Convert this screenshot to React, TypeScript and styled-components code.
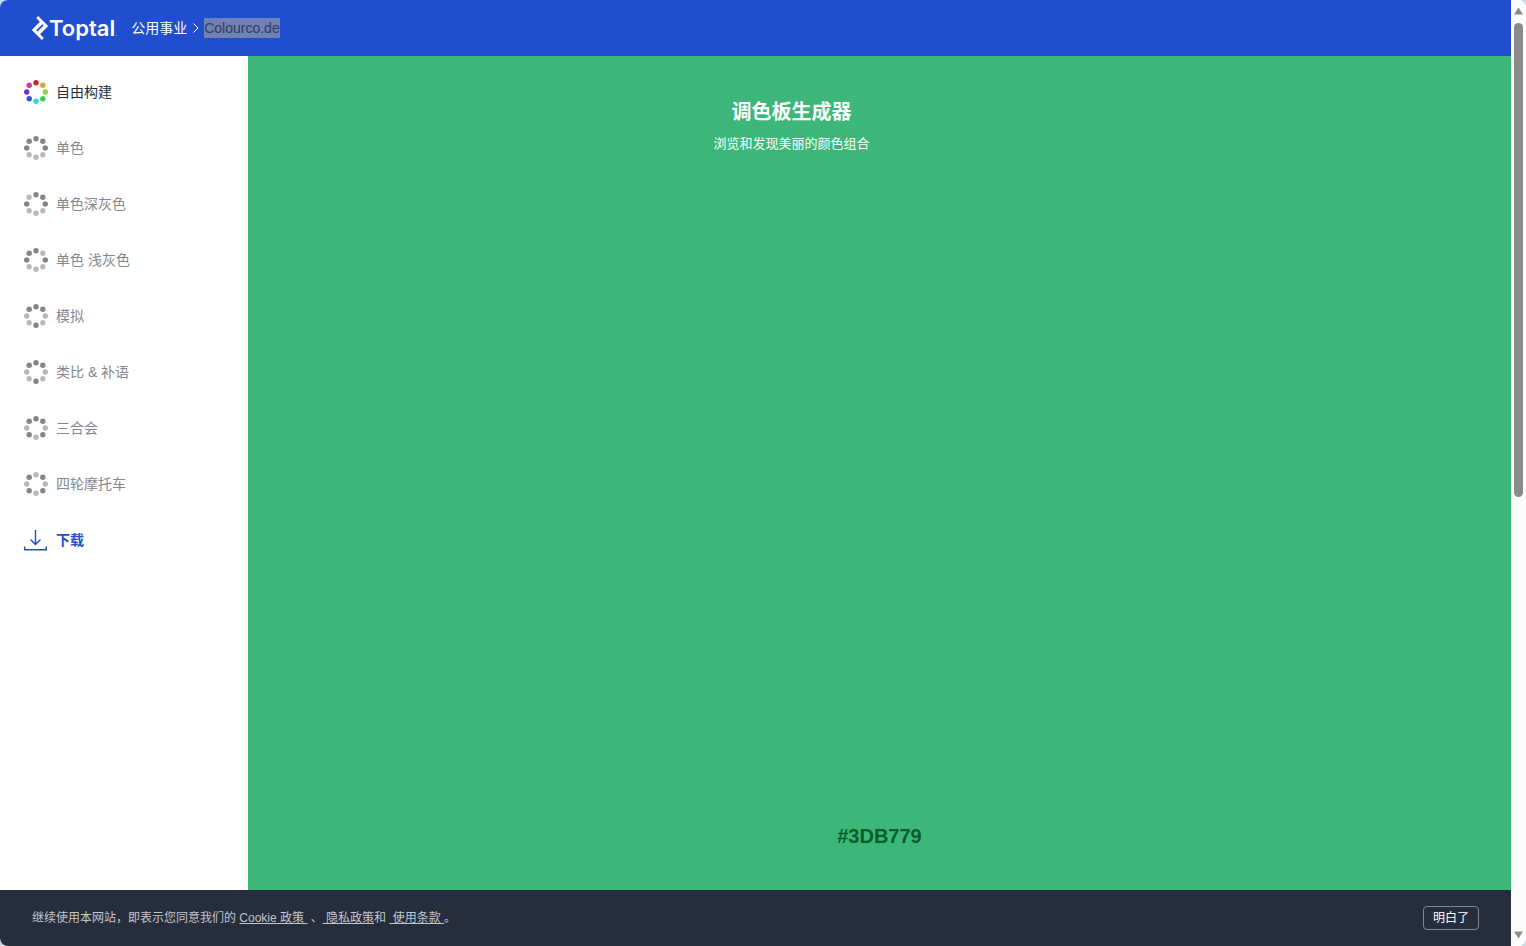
import React from "react";
import styled, { createGlobalStyle } from "styled-components";
import { SiToptal } from "react-icons/si";

const GlobalStyle = createGlobalStyle`
  *, *::before, *::after { box-sizing: border-box; }
  html { background: #c9d8e0; }
  body {
    margin: 0;
    font-family: "Liberation Sans", "Noto Sans CJK SC", sans-serif;
    font-size: 14px;
    line-height: 20px;
  }
`;

const Window = styled.div`
  display: flex;
  min-height: 100vh;
  overflow: hidden;
  border-radius: 8px;
  background: #fff;
`;

const Page = styled.div`
  flex: 1;
  min-width: 0;
  display: flex;
  flex-direction: column;
`;

const TopBar = styled.header`
  display: flex;
  align-items: center;
  gap: 14px;
  height: 56px;
  padding: 0 32px;
  background: #204ecf;
  color: #fff;
`;

const Logo = styled.a`
  display: flex;
  align-items: center;
  color: #fff;
  text-decoration: none;
`;

const LogoMark = styled(SiToptal)`
  width: 24px;
  height: 24px;
  margin: 0 -3px 0 -4px;
`;

const LogoWord = styled.span`
  font: 600 22px/24px Inter, sans-serif;
`;

const LogoDot = styled.span`
  align-self: flex-end;
  width: 1px;
  height: 1px;
  margin: 0 0 4px 1px;
  background: #9fb4ec;
`;

const Breadcrumb = styled.nav`
  display: flex;
  align-items: center;
  gap: 4px;
`;

const Crumb = styled.a`
  color: #fff;
  text-decoration: none;
`;

const CurrentCrumb = styled.span`
  background: #7180b5;
  color: #323c5c;
`;

const Body = styled.div`
  flex: 1;
  display: flex;
`;

const Sidebar = styled.nav`
  flex: 0 0 248px;
  display: flex;
  flex-direction: column;
  align-items: flex-start;
  gap: 32px;
  padding: 24px;
`;

const SchemeButton = styled.button<{ $active?: boolean; $accent?: boolean }>`
  display: flex;
  align-items: center;
  gap: 8px;
  height: 24px;
  padding: 0;
  border: 0;
  background: none;
  font: inherit;
  font-weight: ${(p) => (p.$accent ? 700 : 400)};
  color: ${(p) => (p.$accent ? "#204ecf" : p.$active ? "#262d3d" : "#84888e")};
  cursor: pointer;
`;

const Canvas = styled.main`
  flex: 1;
  display: flex;
  flex-direction: column;
  justify-content: space-between;
  padding: 40px 0;
  background: #3db779;
`;

const Intro = styled.div`
  padding-right: 176px;
  text-align: center;
  color: #fff;
`;

const Title = styled.h1`
  margin: 0;
  font-size: 20px;
  line-height: 32px;
`;

const Subtitle = styled.p`
  margin: 4px 0 0;
  font-size: 13px;
  line-height: 24px;
`;

const HexValue = styled.button`
  align-self: center;
  padding: 0;
  border: 0;
  background: none;
  font: inherit;
  font-size: 20px;
  font-weight: 700;
  line-height: 28px;
  color: #045e26;
  cursor: pointer;
`;

const CookieBar = styled.footer`
  display: flex;
  align-items: center;
  justify-content: space-between;
  height: 56px;
  padding: 0 32px;
  background: #262d3d;
  color: #c4c6ca;
  font-size: 12px;
`;

const Notice = styled.p`
  margin: 0;
  white-space: pre-wrap;
`;

const PolicyLink = styled.a`
  color: inherit;
  text-decoration: underline;
`;

const AcceptButton = styled.button`
  width: 56px;
  height: 24px;
  padding: 0;
  border: 1px solid #84888e;
  border-radius: 4px;
  background: none;
  font: inherit;
  line-height: 20px;
  color: #fff;
  cursor: pointer;
`;

const ScrollTrack = styled.div`
  flex: 0 0 15px;
  display: flex;
  flex-direction: column;
  align-items: center;
  gap: 8px;
  padding: 7px 0;
  background: #fcfcfc;
`;

const ScrollRail = styled.div`
  flex: 1;
  width: 9px;
`;

const ScrollThumb = styled.div<{ $share: number }>`
  height: ${(p) => p.$share * 100}%;
  border-radius: 5px;
  background: #8b8b8b;
`;

const points = [
  [12, 2.7], [18.8, 5.2], [21.3, 12], [18.8, 18.8],
  [12, 21.3], [5.2, 18.8], [2.7, 12], [5.2, 5.2],
];

const hues = ["#d0222b", "#e0a032", "#8fd640", "#35cf54", "#35d3d6", "#2f55cf", "#7430c4", "#cc35a4"];

const shade = (pattern: string) =>
  [...pattern].map((c) => (c === "1" ? "#84848a" : "#b9b9bc"));

function Wheel({ colors }: { colors: string[] }) {
  return (
    <svg width="24" height="24" viewBox="0 0 24 24" aria-hidden="true">
      {points.map(([x, y], i) => (
        <circle key={i} cx={x} cy={y} r="2.7" fill={colors[i]} />
      ))}
    </svg>
  );
}

// Each pattern runs clockwise from the top dot.
const schemes = [
  { name: "自由构建", colors: hues, active: true },
  { name: "单色", colors: shade("11100011") },
  { name: "单色深灰色", colors: shade("11100010") },
  { name: "单色 浅灰色", colors: shade("10100011") },
  { name: "模拟", colors: shade("11001001") },
  { name: "类比 & 补语", colors: shade("11001001") },
  { name: "三合会", colors: shade("11010101") },
  { name: "四轮摩托车", colors: shade("01010101") },
];

export default function App() {
  return (
    <>
      <GlobalStyle />
      <Window>
        <Page>
          <TopBar>
            <Logo href="#">
              <LogoMark aria-hidden="true" />
              <LogoWord>Toptal</LogoWord>
              <LogoDot />
            </Logo>
            <Breadcrumb>
              <Crumb href="#">公用事业</Crumb>
              <svg width="9" height="12" viewBox="0 0 9 12" fill="none" stroke="#fff" aria-hidden="true">
                <path d="M2.5 1.5L7 6l-4.5 4.5" />
              </svg>
              <CurrentCrumb>Colourco.de</CurrentCrumb>
            </Breadcrumb>
          </TopBar>
          <Body>
            <Sidebar>
              {schemes.map((s) => (
                <SchemeButton key={s.name} $active={s.active}>
                  <Wheel colors={s.colors} />
                  {s.name}
                </SchemeButton>
              ))}
              <SchemeButton $accent>
                <svg width="24" height="24" viewBox="0 0 24 24" fill="none" stroke="#204ecf" strokeWidth="1.4" aria-hidden="true">
                  <path d="M11.5 2v14.5M6.5 11.5l5 5 5-5M.7 18.5v3.3h21.6v-3.3" />
                </svg>
                下载
              </SchemeButton>
            </Sidebar>
            <Canvas>
              <Intro>
                <Title>调色板生成器</Title>
                <Subtitle>浏览和发现美丽的颜色组合</Subtitle>
              </Intro>
              <HexValue>#3DB779</HexValue>
            </Canvas>
          </Body>
          <CookieBar>
            <Notice>
              {"继续使用本网站，即表示您同意我们的 "}
              <PolicyLink href="#">{"Cookie 政策 "}</PolicyLink>
              {" 、"}
              <PolicyLink href="#">{" 隐私政策"}</PolicyLink>
              {"和 "}
              <PolicyLink href="#">{" 使用条款 "}</PolicyLink>
              {"。"}
            </Notice>
            <AcceptButton>明白了</AcceptButton>
          </CookieBar>
        </Page>
        <ScrollTrack aria-hidden="true">
          <svg width="9" height="8" viewBox="0 0 9 8">
            <path d="M4.5 0.5L9 7.5H0z" fill="#8b8b8b" />
          </svg>
          <ScrollRail>
            <ScrollThumb $share={474 / 900} />
          </ScrollRail>
          <svg width="9" height="8" viewBox="0 0 9 8">
            <path d="M4.5 7.5L9 0.5H0z" fill="#8b8b8b" />
          </svg>
        </ScrollTrack>
      </Window>
    </>
  );
}
